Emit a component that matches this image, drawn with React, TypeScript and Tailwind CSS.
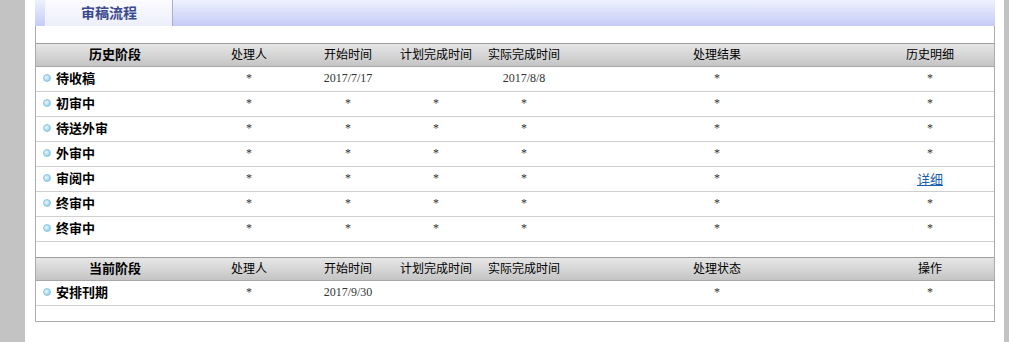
import React from "react";

const GRID = "grid grid-cols-[158px_110px_88px_88px_88px_298px_128px]";
const CJK = "font-['Noto_Sans_CJK_SC','Noto_Sans',sans-serif]";
const SERIF = "font-['Liberation_Serif','Noto_Sans_CJK_SC',serif]";

type Row = {
  stage: string;
  handler: string;
  start: string;
  plan: string;
  actual: string;
  result: string;
  detail: string;
  link?: boolean;
};

const history: Row[] = [
  { stage: "待收稿", handler: "*", start: "2017/7/17", plan: "", actual: "2017/8/8", result: "*", detail: "*" },
  { stage: "初审中", handler: "*", start: "*", plan: "*", actual: "*", result: "*", detail: "*" },
  { stage: "待送外审", handler: "*", start: "*", plan: "*", actual: "*", result: "*", detail: "*" },
  { stage: "外审中", handler: "*", start: "*", plan: "*", actual: "*", result: "*", detail: "*" },
  { stage: "审阅中", handler: "*", start: "*", plan: "*", actual: "*", result: "*", detail: "详细", link: true },
  { stage: "终审中", handler: "*", start: "*", plan: "*", actual: "*", result: "*", detail: "*" },
  { stage: "终审中", handler: "*", start: "*", plan: "*", actual: "*", result: "*", detail: "*" },
];

const current: Row[] = [
  { stage: "安排刊期", handler: "*", start: "2017/9/30", plan: "", actual: "", result: "*", detail: "*" },
];

function Bullet() {
  return (
    <span className="inline-block w-[8px] h-[8px] rounded-full border border-[#8fc6e2] bg-[radial-gradient(circle_at_40%_40%,#eaf7fd_0%,#a9dbf2_55%,#6cb6de_100%)]" />
  );
}

function HeaderRow({ labels }: { labels: string[] }) {
  return (
    <div
      className={`${GRID} h-[24px] items-center text-center text-black border-t border-b border-t-[#9c9c9c] border-b-[#a8a8a8] bg-gradient-to-b from-[#e6e6e6] via-[#d6d6d6] to-[#c4c4c4] ${CJK}`}
    >
      {labels.map((l, i) => (
        <div key={i} className={`pb-[2px] ${i === 0 ? "font-bold text-[13px]" : "text-[12px]"}`}>
          {l}
        </div>
      ))}
    </div>
  );
}

function Cell({ v }: { v: string }) {
  return <div className={`text-[12px] leading-[16px] pb-[2px] text-[#333] ${SERIF}`}>{v}</div>;
}

function DataRow({ r }: { r: Row }) {
  return (
    <div className={`${GRID} h-[25px] items-center text-center border-b border-[#cfcfcf]`}>
      <div className={`flex items-center gap-[5px] pl-[7px] pb-[2px] text-left text-[13px] font-bold text-black ${CJK}`}>
        <Bullet />
        <span>{r.stage}</span>
      </div>
      <Cell v={r.handler} />
      <Cell v={r.start} />
      <Cell v={r.plan} />
      <Cell v={r.actual} />
      <Cell v={r.result} />
      {r.link ? (
        <div className={`text-[13px] text-[#1a5fae] underline ${CJK}`}>{r.detail}</div>
      ) : (
        <Cell v={r.detail} />
      )}
    </div>
  );
}

export default function App() {
  return (
    <div className="flex h-[342px] w-[1009px] bg-white overflow-hidden">
      <div className="w-[25px] shrink-0 bg-[#c3c3c3]" />
      <div className="flex-1 pl-[10px]">
        <div className="w-[960px]">
          {/* title band with tab */}
          <div className="h-[26px] bg-gradient-to-b from-[#eef1fd] to-[#c5ccf6] pl-[10px]">
            <div className="h-[26px] w-[128px] flex items-start justify-center pt-[2px] border-l border-l-[#f4f6ff] border-r border-r-[#a9afc9] bg-gradient-to-b from-[#fcfcff] to-[#eceefb]">
              <span className={`text-[14px] font-bold text-[#3b4a8e] ${CJK}`}>审稿流程</span>
            </div>
          </div>
          {/* panel body */}
          <div className="border-l border-r border-b border-[#ababab]">
            <div className="h-[17px]" />
            <HeaderRow labels={["历史阶段", "处理人", "开始时间", "计划完成时间", "实际完成时间", "处理结果", "历史明细"]} />
            {history.map((r, i) => (
              <DataRow key={i} r={r} />
            ))}
            <div className="h-[15px]" />
            <HeaderRow labels={["当前阶段", "处理人", "开始时间", "计划完成时间", "实际完成时间", "处理状态", "操作"]} />
            {current.map((r, i) => (
              <DataRow key={i} r={r} />
            ))}
            <div className="h-[15px]" />
          </div>
        </div>
      </div>
      <div className="w-[5px] shrink-0 bg-[#c3c3c3]" />
    </div>
  );
}
